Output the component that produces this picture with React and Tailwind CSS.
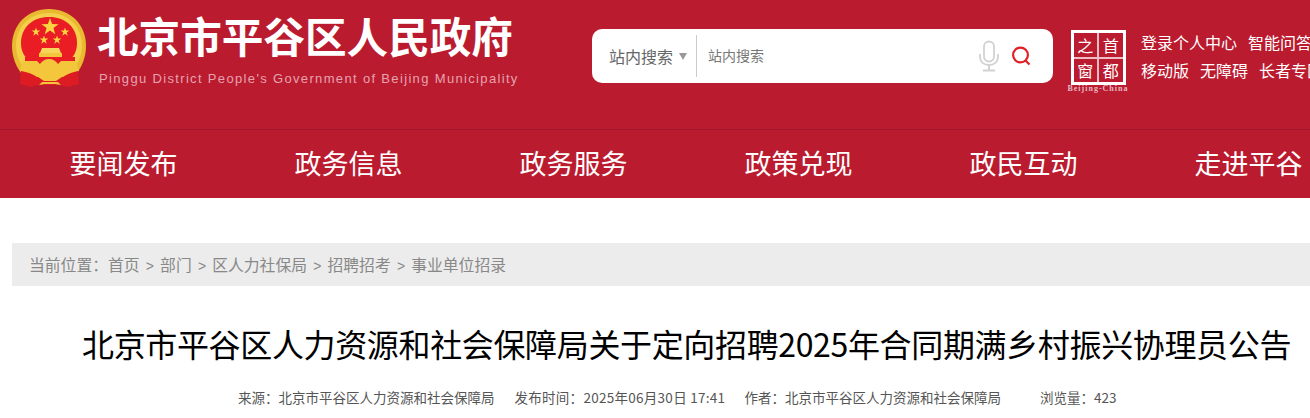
import React from "react";

const CJK = '"Noto Sans CJK SC", "Liberation Sans", sans-serif';

function Star({ cx, cy, r }) {
  const pts = [];
  for (let i = 0; i < 10; i++) {
    const a = -Math.PI / 2 + (i * Math.PI) / 5;
    const rr = i % 2 === 0 ? r : r * 0.4;
    pts.push(`${cx + rr * Math.cos(a)},${cy + rr * Math.sin(a)}`);
  }
  return <polygon points={pts.join(" ")} fill="#fbd341" />;
}

function Emblem() {
  return (
    <svg width="76" height="80" viewBox="0 0 76 80" className="shrink-0">
      <path d="M14 70C5 60 1 49 1 38 1 16 17 1 38 1s37 15 37 37c0 11-4 22-13 32z" fill="#e9b92f" />
      <path d="M16 64C9 56 5 47 5 38 5 18 19 5 38 5s33 13 33 33c0 9-4 18-11 26z" fill="#f3cf4a" />
      <path d="M20 54C13 49 10 43 10 35 10 19 22 9 38 9s28 10 28 26c0 8-3 14-10 19z" fill="#ea1c24" />
      <Star cx={39} cy={19} r={9} />
      <Star cx={25} cy={24} r={4.5} />
      <Star cx={54} cy={24} r={4.5} />
      <Star cx={33} cy={32} r={4.5} />
      <Star cx={46} cy={32} r={4.5} />
      <path d="M31 40h17l2 5H29z" fill="#f6d65a" />
      <path d="M28 45h23v4H28z" fill="#f3c63c" />
      <path d="M14 49h50v7H14z" fill="#ea1c24" />
      <path d="M11 53h15l3 3c2-3 5-5 9-5s7 2 9 5l3-3h15l3 10c-6 1-12 3-16 6H26c-4-3-10-5-17-6z" fill="#f3c63c" />
      <path d="M10 63c6 1 12 3 16 6h26c4-3 10-5 15-6l1 13-12 3-8-2H28l-9 2-10-3z" fill="#dc1b23" />
      <path d="M27 69h24l-6 4H33z" fill="#f3c63c" />
      <path d="M31 74h16l3 3-6-1H34l-6 1z" fill="#f3c63c" />
    </svg>
  );
}

function Mic() {
  return (
    <svg width="22" height="32" viewBox="0 0 22 32" fill="none" stroke="#d2d2d2" className="shrink-0">
      <rect x="6" y="1.5" width="10" height="20" rx="5" strokeWidth="1.8" />
      <path d="M2 14v3c0 5 4 8 9 8s9-3 9-8v-3" strokeWidth="1.8" />
      <path d="M11 25v5M5 30.5h12" strokeWidth="2" />
    </svg>
  );
}

function SearchIcon() {
  return (
    <svg width="20" height="20" viewBox="0 0 20 20" fill="none" stroke="#df2027" strokeWidth="2.2" className="shrink-0">
      <circle cx="9.5" cy="9" r="7.4" />
      <path d="M14 14l4.5 4.5" />
    </svg>
  );
}

function Capital() {
  return (
    <div className="flex w-[62px] shrink-0 flex-col items-center">
      <div className="grid h-[55px] w-[55px] grid-cols-2 grid-rows-2 gap-[2px] border-[3px] border-white bg-[#eebcc3] text-[16px] leading-none text-white" style={{ fontFamily: '"Noto Sans CJK SC", serif' }}>
        <span className="flex items-center justify-center bg-[#bb1b2f]">之</span>
        <span className="flex items-center justify-center bg-[#bb1b2f]">首</span>
        <span className="flex items-center justify-center bg-[#bb1b2f]">窗</span>
        <span className="flex items-center justify-center bg-[#bb1b2f]">都</span>
      </div>
      <span className="whitespace-nowrap text-[8px] font-bold leading-[8px] tracking-[1px] text-[#e8b9c0]" style={{ fontFamily: '"Liberation Serif", serif' }}>Beijing-China</span>
    </div>
  );
}

const NAV = ["要闻发布", "政务信息", "政务服务", "政策兑现", "政民互动", "走进平谷"];
const CRUMBS = ["首页", "部门", "区人力社保局", "招聘招考", "事业单位招录"];

export default function App() {
  return (
    <div className="h-[418px] w-[1310px] overflow-hidden bg-white" style={{ fontFamily: CJK }}>
      <header className="flex h-[130px] items-start border-b border-[#a3172a] bg-[#bb1b2f]">
        <div className="ml-[11px] mt-[8px]"><Emblem /></div>
        <div className="ml-[10px] mt-[9px] w-[440px] shrink-0">
          <div className="whitespace-nowrap text-[41.6px] font-bold leading-[52px] text-white">北京市平谷区人民政府</div>
          <div className="ml-[2px] mt-[10px] whitespace-nowrap text-[13px] leading-[16px] tracking-[1.34px] text-[#e6a3af]" style={{ fontFamily: '"Liberation Sans", sans-serif' }}>
            Pinggu District People's Government of Beijing Municipality
          </div>
        </div>
        <div className="ml-[55px] mt-[29px] flex h-[54px] w-[461px] shrink-0 items-center rounded-[10px] bg-white">
          <span className="ml-[17px] text-[16px] text-[#666]">站内搜索</span>
          <span className="ml-[6px] h-0 w-0 border-x-[4px] border-t-[7px] border-x-transparent border-t-[#999]" />
          <span className="ml-[9px] h-[42px] w-px bg-[#ccc]" />
          <span className="ml-[11px] -mt-[2px] text-[14px] text-[#777]">站内搜索</span>
          <span className="ml-auto"><Mic /></span>
          <span className="ml-[11px] mr-[22px]"><SearchIcon /></span>
        </div>
        <div className="ml-[14px] mt-[30px]"><Capital /></div>
        <div className="ml-[12px] mt-[28px] shrink-0 whitespace-nowrap text-[16px] leading-[28px] text-white">
          <div className="flex gap-[11px]"><span>登录个人中心</span><span>智能问答</span></div>
          <div className="flex gap-[11px]"><span>移动版</span><span>无障碍</span><span>长者专区</span></div>
        </div>
      </header>
      <nav className="flex h-[68px] items-start overflow-hidden bg-[#bb1b2f] pl-[11px]">
        {NAV.map((n) => (
          <span key={n} className="w-[225px] shrink-0 text-center text-[27px] leading-[65px] text-white">{n}</span>
        ))}
      </nav>
      <div className="ml-[12px] mt-[45px] flex h-[43px] items-center bg-[#ececec] pl-[17px] text-[15.8px] text-[#888]">
        <span>当前位置：</span>
        {CRUMBS.map((c, i) => (
          <React.Fragment key={c}>
            {i > 0 && <span className="mt-[3px] w-[20.5px] text-center text-[14px]" style={{ fontFamily: '"Liberation Sans", sans-serif' }}>&gt;</span>}
            <span>{c}</span>
          </React.Fragment>
        ))}
      </div>
      <h1 className="mt-[34px] whitespace-nowrap pl-[82px] text-[32px] font-normal leading-[46px] tracking-[-0.35px] text-black">
        北京市平谷区人力资源和社会保障局关于定向招聘2025年合同期满乡村振兴协理员公告
      </h1>
      <div className="mt-[19px] flex whitespace-nowrap pl-[238px] text-[13.5px] leading-[24px] text-[#555]">
        <span>来源：北京市平谷区人力资源和社会保障局</span>
        <span className="ml-[20px] w-[210px] tracking-[0.28px]">发布时间：2025年06月30日 17:41</span>
        <span className="ml-[20px]">作者：北京市平谷区人力资源和社会保障局</span>
        <span className="ml-[39px]">浏览量：423</span>
      </div>
    </div>
  );
}
